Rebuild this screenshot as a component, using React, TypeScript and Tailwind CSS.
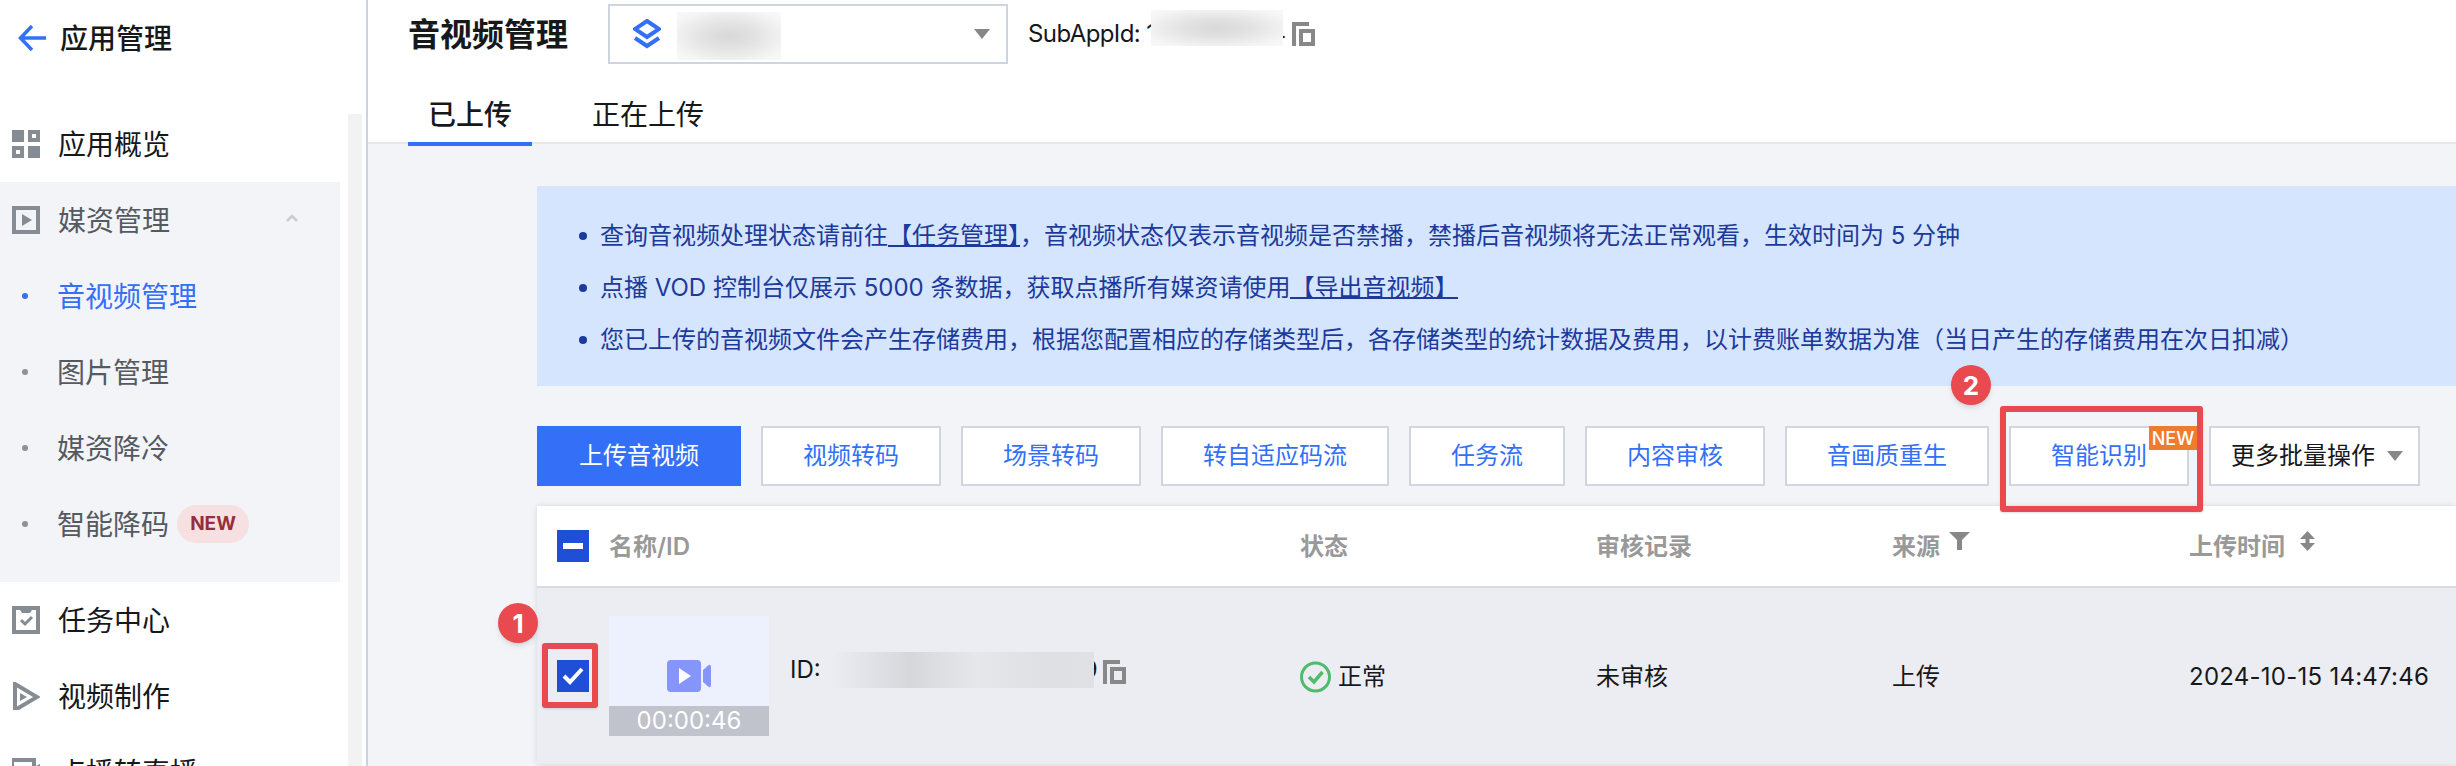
import React from "react";

const Copy = () => (
  <svg width="23" height="24" viewBox="0 0 23 24" fill="none" stroke="#888888" strokeWidth="4" className="shrink-0">
    <path d="M2 24V2H17" />
    <rect x="9" y="9" width="12" height="13" />
  </svg>
);

const Caret = () => (
  <svg width="16" height="10" viewBox="0 0 16 10" className="shrink-0"><path d="M0 0H16L8 10Z" fill="#888888" /></svg>
);

const I = ({ children }: { children: React.ReactNode }) => (
  <svg width="28" height="28" viewBox="0 0 28 28" className="shrink-0">{children}</svg>
);

const c = "#858c94";

const GridIcon = () => (
  <I>
    <rect x="0" y="0" width="12" height="12" fill={c} />
    <rect x="18" y="2" width="8" height="8" fill="none" stroke={c} strokeWidth="4" />
    <rect x="2" y="18" width="8" height="8" fill="none" stroke={c} strokeWidth="4" />
    <rect x="16" y="16" width="12" height="12" fill={c} />
  </I>
);
const MediaIcon = () => (
  <I>
    <rect x="2" y="2" width="24" height="24" fill="none" stroke={c} strokeWidth="4" />
    <path d="M10 8L20 14L10 20Z" fill={c} />
  </I>
);
const TaskIcon = () => (
  <I>
    <path d="M0 0H28V28H0Z M4 4V24H24V4H20L18 7H10L8 4Z" fill={c} fillRule="evenodd" />
    <path d="M9 14L13 18L20 11" fill="none" stroke={c} strokeWidth="3" />
  </I>
);
const VideoIcon = () => (
  <I>
    <path d="M3 2L25 15L3 28Z" fill="none" stroke={c} strokeWidth="4" />
    <path d="M8 11L15 15L8 19Z" fill={c} />
  </I>
);
const LiveIcon = () => (
  <I>
    <rect x="0" y="2" width="22" height="24" fill="none" stroke={c} strokeWidth="4" />
    <path d="M24 8L32 4V24L24 20Z" fill={c} />
  </I>
);

const Row = ({ icon, label, gray }: { icon: React.ReactNode; label: string; gray?: boolean }) => (
  <div className={`flex h-[76px] shrink-0 items-center gap-[18px] pl-3 text-[28px] ${gray ? "text-[#555a60]" : "text-[#16181a]"}`}>
    {icon}
    <span className="pt-[2px]">{label}</span>
  </div>
);

const Sub = ({ label, active, children }: { label: string; active?: boolean; children?: React.ReactNode }) => (
  <div className={`flex h-[76px] items-center pl-[22px] text-[28px] ${active ? "text-[#3370f7]" : "text-[#555a60]"}`}>
    <span className={`h-[6px] w-[6px] rounded-full ${active ? "bg-[#3370f7]" : "bg-[#8b9299]"}`} />
    <span className="ml-[29px] pt-[2px]">{label}</span>
    {children}
  </div>
);

const Sidebar = () => (
  <aside className="flex h-full w-[368px] shrink-0 border-r-2 border-[#ccd2de] bg-white">
    <div className="w-[340px] shrink-0">
      <div className="flex h-[76px] items-center gap-[14px] pl-[18px] text-[28px] font-medium text-[#16181a]">
        <svg width="28" height="28" viewBox="0 0 28 28" fill="none" stroke="#3370f7" strokeWidth="3.5" className="shrink-0">
          <path d="M28 14H3M14 2L2.5 14L14 26" />
        </svg>
        <span className="pt-[2px]">应用管理</span>
      </div>
      <div className="h-[30px]" />
      <Row icon={<GridIcon />} label="应用概览" />
      <div className="bg-[#f2f4f8] pb-5">
        <div className="flex items-center pr-[42px]">
          <div className="flex-1"><Row icon={<MediaIcon />} label="媒资管理" gray /></div>
          <svg width="12" height="8" viewBox="0 0 12 8" fill="none" stroke="#c9cbce" strokeWidth="2.5" className="-mt-[4px]"><path d="M1 7L6 2L11 7" /></svg>
        </div>
        <Sub label="音视频管理" active />
        <Sub label="图片管理" />
        <Sub label="媒资降冷" />
        <Sub label="智能降码">
          <span className="ml-2 flex h-[38px] w-[72px] items-center justify-center rounded-full bg-[#f7e0e2] text-[19px] font-bold text-[#982d3e]">NEW</span>
        </Sub>
      </div>
      <Row icon={<TaskIcon />} label="任务中心" />
      <Row icon={<VideoIcon />} label="视频制作" />
      <Row icon={<LiveIcon />} label="点播转直播" />
    </div>
    <div className="ml-2 mt-[114px] h-full w-[14px] bg-[#f2f2f2]" />
  </aside>
);

const Patch = ({ className, tone }: { className: string; tone: "white" | "row" }) => (
  <span
    className={`relative z-10 block shrink-0 ${className} ${
      tone === "white"
        ? "bg-[radial-gradient(ellipse_at_center,#d8d8d8_0%,#e2e2e2_35%,#f5f5f5_80%,#f9f9f9_100%)]"
        : "bg-[linear-gradient(90deg,#ecedf2_0%,#d6d7db_30%,#e6e7eb_55%,#dfe0e4_80%,#e0e1e5_100%)]"
    }`}
  />
);

const Header = () => (
  <header className="h-[144px] border-b-2 border-[#e6e8ee] bg-white pl-10">
    <div className="flex h-[68px] items-center">
      <h1 className="pt-[2px] text-[32px] font-semibold text-[#16181a]">音视频管理</h1>
      <div className="ml-10 flex h-[60px] w-[400px] items-center border-2 border-[#cfd5de] pl-[23px] pr-4">
        <svg width="28" height="30" viewBox="0 0 28 30" fill="none" stroke="#3370f7" strokeWidth="4" className="shrink-0">
          <path d="M14 2L26 10L14 18L2 10Z" />
          <path d="M2 19L14 27L26 19" />
        </svg>
        <Patch className="ml-4 mt-1 h-[48px] w-[104px]" tone="white" />
        <span className="flex-1" />
        <Caret />
      </div>
      <div className="ml-5 flex items-center text-[24px] tracking-[-0.6px] text-[#16181a]">
        <span className="whitespace-pre">SubAppId: 1</span>
        <Patch className="-ml-[4px] -mt-[12px] h-[36px] w-[132px]" tone="white" />
        <span className="-ml-[13px]">4</span>
        <span className="ml-[7px]"><Copy /></span>
      </div>
    </div>
    <div className="flex h-[76px] items-end">
      <div className="-mb-[2px] flex h-[60px] w-[124px] items-start justify-center border-b-4 border-[#3370f7] text-[28px] font-medium leading-[58px] text-[#16181a]">已上传</div>
      <div className="-mb-[2px] ml-[40px] flex h-[60px] items-start px-5 text-[28px] leading-[58px] text-[#16181a]">正在上传</div>
    </div>
  </header>
);

const Rule = () => <span className="absolute bottom-[7px] left-0 right-0 h-[2px] bg-[#1c3a9c]" />;

const Notice = () => (
  <div className="flex h-[200px] flex-col pl-[42px] pt-6 text-[24px] text-[#1c3a9c]">
    <div className="flex h-[52px] items-center whitespace-nowrap">
      <Dot />
      <span>查询音视频处理状态请前往</span>
      <a className="relative w-[132px]">【任务管理】<Rule /></a>
      <span>，音视频状态仅表示音视频是否禁播，禁播后音视频将无法正常观看，生效时间为 5 分钟</span>
    </div>
    <div className="flex h-[52px] items-center whitespace-nowrap">
      <Dot />
      <span className="whitespace-pre">点播 VOD 控制台仅展示 5000 条数据，获取点播所有媒资请使用</span>
      <a className="relative">【导出音视频】<Rule /></a>
    </div>
    <div className="flex h-[52px] items-center whitespace-nowrap">
      <Dot />
      <span>您已上传的音视频文件会产生存储费用，根据您配置相应的存储类型后，各存储类型的统计数据及费用，以计费账单数据为准（当日产生的存储费用在次日扣减）</span>
    </div>
  </div>
);

const Dot = () => <span className="mr-[13px] h-2 w-2 shrink-0 rounded-full bg-[#1c3a9c]" />;

const Btn = ({ label, children }: { label: string; children?: React.ReactNode }) => (
  <button className="relative h-[60px] whitespace-nowrap border-2 border-[#d0d5de] bg-white px-10 text-[24px] text-[#3370f7]">
    {label}
    {children}
  </button>
);

const Toolbar = () => (
  <div className="mt-10 flex gap-5">
    <button className="h-[60px] whitespace-nowrap bg-[#3370f7] px-[42px] text-[24px] text-white">上传音视频</button>
    <Btn label="视频转码" />
    <Btn label="场景转码" />
    <Btn label="转自适应码流" />
    <Btn label="任务流" />
    <Btn label="内容审核" />
    <Btn label="音画质重生" />
    <Btn label="智能识别">
      <span className="absolute -right-[10px] -top-[2px] flex h-6 w-12 items-center justify-center bg-[#ee7b2e] text-[18px] font-medium text-white">NEW</span>
    </Btn>
    <button className="flex h-[60px] w-[211px] items-center whitespace-nowrap border-2 border-[#d0d5de] bg-white pl-5 text-[24px] text-[#16181a]">
      更多批量操作
      <span className="ml-3"><Caret /></span>
    </button>
  </div>
);

const Check = ({ minus }: { minus?: boolean }) => (
  <span className="flex h-8 w-8 items-center justify-center bg-[#1f4fd6]">
    {minus ? (
      <span className="h-[6px] w-5 bg-white" />
    ) : (
      <svg width="22" height="20" viewBox="0 0 22 20" fill="none" stroke="white" strokeWidth="4"><path d="M2 10L8 16L20 3" /></svg>
    )}
  </span>
);

const Table = () => (
  <div className="mt-5 bg-white shadow-[0_0_6px_rgba(0,0,0,0.12)]">
    <div className="flex h-[82px] items-center border-b-2 border-[#d8dae4] text-[24px] font-semibold text-[#999999]">
      <div className="w-[72px] pl-5"><Check minus /></div>
      <div className="w-[691px] pt-[2px]">名称/ID</div>
      <div className="w-[296px] pt-[2px]">状态</div>
      <div className="w-[296px] pt-[2px]">审核记录</div>
      <div className="flex w-[297px] items-center gap-[9px] pt-[2px]">
        来源
        <svg width="21" height="18" viewBox="0 0 21 18" className="-mt-3"><path d="M0 0H21L13 8V18H8V8Z" fill="#888888" /></svg>
      </div>
      <div className="flex items-center gap-[14px] pt-[2px]">
        上传时间
        <svg width="17" height="20" viewBox="0 0 17 20" className="-mt-3"><path d="M8.5 0L16 8H1Z M1 12H16L8.5 20Z M6.5 7H10.5V13H6.5Z" fill="#888888" /></svg>
      </div>
    </div>
    <div className="flex h-[177px] items-center border-b border-[#e4e5ea] bg-[#ecedf2] text-[24px] text-[#16181a]">
      <div className="w-[72px] pl-5"><Check /></div>
      <div className="flex w-[691px] items-center">
        <div className="flex h-[120px] w-40 shrink-0 flex-col bg-[#edf0fd]">
          <div className="flex flex-1 justify-center pt-[44px]">
            <svg width="44" height="32" viewBox="0 0 44 32">
              <rect x="0" y="0" width="34" height="32" rx="4" fill="#8595fb" />
              <path d="M36 10L41 5.5Q44 3.5 44 7V25Q44 28.5 41 26.5L36 22Z" fill="#8595fb" />
              <path d="M12 8L24 16L12 24Z" fill="white" />
            </svg>
          </div>
          <div className="flex h-[30px] items-center justify-center bg-[#c0c2cc] text-[24px] text-white">00:00:46</div>
        </div>
        <div className="-mt-3 ml-[21px] flex items-center">
          <span>ID:</span>
          <Patch className="ml-[10px] h-9 w-[263px]" tone="row" />
          <span className="-ml-[11px]">9</span>
          <span className="ml-[5px] mt-1"><Copy /></span>
        </div>
      </div>
      <div className="flex w-[296px] items-center gap-[7px] pt-[2px]">
        <svg width="31" height="32" viewBox="0 0 31 32" fill="none" stroke="#4fbb6b" className="shrink-0">
          <circle cx="15.5" cy="16" r="14" strokeWidth="3" />
          <path d="M9 16L14 21L22.5 11" strokeWidth="3.5" />
        </svg>
        正常
      </div>
      <div className="w-[296px] pt-[2px]">未审核</div>
      <div className="w-[297px] pt-[2px]">上传</div>
      <div className="whitespace-nowrap pt-[2px] tracking-[0.25px]">2024-10-15 14:47:46</div>
    </div>
  </div>
);

export default function App() {
  return (
    <div className="relative flex h-[766px] w-[2456px] overflow-hidden bg-[#f2f4f8] font-['Inter','Noto_Sans_CJK_SC',sans-serif]">
      <Sidebar />
      <main className="min-w-0 flex-1">
        <Header />
        <div className="pl-[169px] pt-[42px]">
          <div className="bg-[#d5e5fd]"><Notice /></div>
          <Toolbar />
          <Table />
        </div>
      </main>
      <div className="absolute left-[1951px] top-[365px] flex h-10 w-10 items-center justify-center rounded-full bg-[#e84a50] text-[26px] font-bold text-white shadow-md">2</div>
      <div className="absolute left-[2000px] top-[406px] h-[106px] w-[203px] rounded-[3px] border-[6px] border-[#e84a50] shadow-sm" />
      <div className="absolute left-[498px] top-[603px] flex h-10 w-10 items-center justify-center rounded-full bg-[#e84a50] text-[26px] font-bold text-white shadow-md">1</div>
      <div className="absolute left-[542px] top-[643px] h-[65px] w-[56px] rounded-[3px] border-[6px] border-[#e84a50] shadow-sm" />
    </div>
  );
}
